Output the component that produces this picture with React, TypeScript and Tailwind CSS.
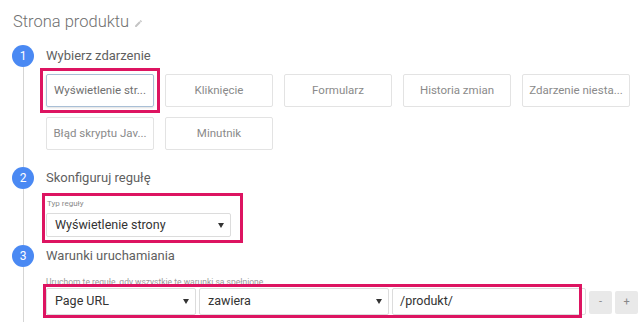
import React from "react";

const events = [
  "Wyświetlenie str...",
  "Kliknięcie",
  "Formularz",
  "Historia zmian",
  "Zdarzenie niesta...",
  "Błąd skryptu Jav...",
  "Minutnik",
];

function Caret() {
  return (
    <svg width="6" height="5" viewBox="0 0 6 5" className="shrink-0">
      <path d="M0 0h6L3 5z" fill="#333" />
    </svg>
  );
}

function Step({
  n,
  title,
  children,
}: {
  n: number;
  title: string;
  children: React.ReactNode;
}) {
  return (
    <div className="flex">
      <div className="flex w-[46px] shrink-0 flex-col items-center">
        <div className="flex h-[22px] w-[22px] items-center justify-center rounded-full bg-[#4a89f3] text-[12px] text-white">
          {n}
        </div>
        <div className="w-px flex-1 bg-[#d5d5d5]" />
      </div>
      <div className="flex-1">
        <div className="h-[22px] text-[13px] leading-[22px] text-[#5f5f5f]">{title}</div>
        {children}
      </div>
    </div>
  );
}

export default function App() {
  return (
    <div
      className="h-[322px] w-[640px] overflow-hidden bg-white"
      style={{ fontFamily: "Roboto, 'Liberation Sans', sans-serif" }}
    >
      <div className="flex items-center gap-[5px] pl-[13px] pt-[10px] text-[16.5px] font-light leading-[24px] text-[#707070]">
        Strona produktu
        <svg width="9" height="9" viewBox="0 0 24 24" className="mt-[2px]">
          <path
            d="M3 17.25V21h3.75L17.81 9.94l-3.75-3.75L3 17.25zM20.71 7.04a1 1 0 0 0 0-1.41l-2.34-2.34a1 1 0 0 0-1.41 0l-1.83 1.83 3.75 3.75 1.83-1.83z"
            fill="#c4c4c4"
          />
        </svg>
      </div>

      <div className="mt-[11px]">
        <Step n={1} title="Wybierz zdarzenie">
          <div className="mt-[7px] grid w-[584px] grid-cols-[repeat(5,108px)] gap-x-[11px] gap-y-[10px] pb-[17px]">
            {events.map((e, i) => (
              <div
                key={e}
                className={`relative flex h-[33px] items-center justify-center rounded-[2px] border text-[11.5px] text-[#8a8a8a] ${
                  i === 0 ? "border-[#a9bfd6] text-[#707070] shadow-[0_1px_2px_rgba(0,0,0,0.12)]" : "border-[#e3e3e3]"
                }`}
              >
                {e}
                {i === 0 && (
                  <div className="absolute -inset-[7px] border-[3px] border-[#dd1461]" />
                )}
              </div>
            ))}
          </div>
        </Step>

        <Step n={2} title="Skonfiguruj regułę">
          <div className="-ml-[4px] mb-[2px] mt-[4px] h-[50px] w-[201px] border-[3px] border-[#dd1461] px-[1px] pt-[1px]">
            <div className="h-[14px] pl-[1px] text-[8px] leading-[14px] text-[#8a8a8a]">Typ reguły</div>
            <div className="mt-[2px] flex h-[24px] w-[185px] items-center justify-between rounded-[2px] border border-[#dcdcdc] pl-[8px] pr-[6px] text-[12.5px] text-[#333]">
              Wyświetlenie strony
              <Caret />
            </div>
          </div>
        </Step>

        <Step n={3} title="Warunki uruchamiania">
          <div className="mt-[9px] h-[12px] text-[8.5px] leading-[12px] text-[#9a9a9a]">
            Uruchom tę regułę, gdy wszystkie te warunki są spełnione
          </div>
          <div className="relative box-content flex h-[27px] items-center gap-[3px] pb-[8px]">
            <div className="flex h-[27px] w-[150px] items-center justify-between rounded-[2px] border border-[#dcdcdc] pl-[8px] pr-[6px] text-[12.5px] text-[#333]">
              Page URL
              <Caret />
            </div>
            <div className="flex h-[27px] w-[190px] items-center justify-between rounded-[2px] border border-[#dcdcdc] pl-[8px] pr-[6px] text-[12.5px] text-[#333]">
              zawiera
              <Caret />
            </div>
            <div className="flex h-[27px] w-[194px] items-center rounded-[2px] border border-[#dcdcdc] pl-[7px] text-[12.5px] text-[#333]">
              /produkt/
            </div>
            <div className="mt-[2px] flex h-[23px] w-[23px] items-center justify-center rounded-[2px] bg-[#e9e9e9] text-[11px] text-[#888]">
              -
            </div>
            <div className="mt-[2px] flex h-[23px] w-[23px] items-center justify-center rounded-[2px] bg-[#e9e9e9] text-[11px] text-[#888]">
              +
            </div>
            <div className="absolute -left-[3px] -top-[4px] h-[34px] w-[539px] border-[3px] border-[#dd1461]" />
          </div>
        </Step>
      </div>
    </div>
  );
}
